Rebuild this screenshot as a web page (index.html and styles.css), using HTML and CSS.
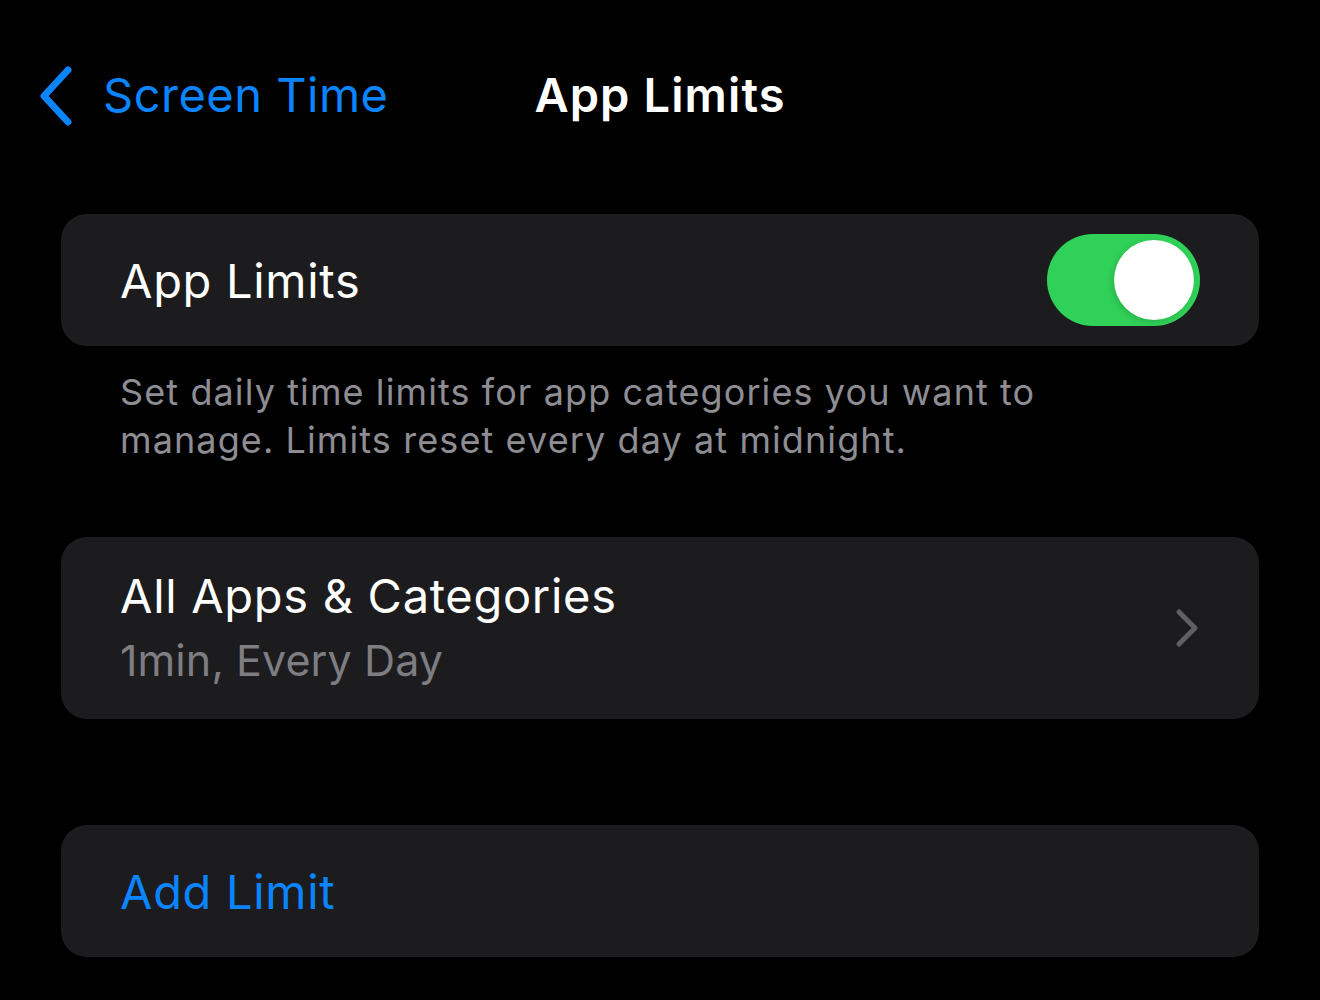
FILE: index.html
```html
<!DOCTYPE html>
<html lang="en">
<head>
<meta charset="utf-8">
<title>App Limits</title>
<link rel="stylesheet" href="styles.css">
</head>
<body>
<header class="nav">
  <a class="back" href="#">
    <svg class="back-icon" width="36" height="60" viewBox="0 0 36 60"><path d="M30 4 L6 30 L30 56" fill="none" stroke="#0a84ff" stroke-width="7" stroke-linecap="round" stroke-linejoin="round"/></svg>
    <span class="back-label">Screen Time</span>
  </a>
  <h1 class="title">App Limits</h1>
  <div class="spacer"></div>
</header>
<main class="content">
  <section class="card row-toggle">
    <span class="row-label">App Limits</span>
    <div class="switch"><div class="knob"></div></div>
  </section>
  <p class="footnote">Set daily time limits for app categories you want to manage. Limits reset every day at midnight.</p>
  <section class="card row-detail">
    <div class="detail-text">
      <span class="row-label">All Apps &amp; Categories</span>
      <span class="row-sub">1min, Every Day</span>
    </div>
    <svg class="chevron" width="24" height="40" viewBox="0 0 24 40"><path d="M4 4 L20 20 L4 36" fill="none" stroke="#5f5f64" stroke-width="5" stroke-linecap="round" stroke-linejoin="round"/></svg>
  </section>
  <section class="card row-action">
    <span class="action-label">Add Limit</span>
  </section>
</main>
</body>
</html>
```
FILE: styles.css
```css
* { box-sizing: border-box; }
html, body {
  margin: 0;
  padding: 0;
  background: #000;
  font-family: Inter, "Noto Sans", "Liberation Sans", sans-serif;
  color: #fff;
}
.nav {
  height: 192px;
  display: grid;
  grid-template-columns: 1fr auto 1fr;
  align-items: center;
}
.back {
  display: flex;
  align-items: center;
  gap: 29px;
  padding-left: 38px;
  text-decoration: none;
  color: #0a84ff;
}
.back-icon { display: block; }
.back-label {
  font-size: 47px;
  letter-spacing: 0.5px;
  transform: translateY(-2px);
}
.title {
  margin: 0;
  font-size: 47px;
  font-weight: 600;
  letter-spacing: 1.1px;
  transform: translateY(-2px);
}
.content {
  padding: 22px 61px 0;
  display: flex;
  flex-direction: column;
}
.card {
  background: #1c1c1e;
  border-radius: 26px;
  display: flex;
  align-items: center;
  padding: 0 59px 0 59px;
}
.row-toggle {
  height: 132px;
  justify-content: space-between;
}
.row-label {
  font-size: 47px;
  letter-spacing: 0.7px;
  color: #fff;
}
.switch {
  width: 153px;
  height: 92px;
  border-radius: 46px;
  background: #30d158;
  display: flex;
  align-items: center;
  justify-content: flex-end;
  padding-right: 6px;
}
.knob {
  width: 80px;
  height: 80px;
  border-radius: 50%;
  background: #fff;
  box-shadow: -2px 2px 6px rgba(0,0,0,0.15);
}
.footnote {
  margin: 22px 0 0;
  padding: 0 150px 0 59px;
  font-size: 36px;
  line-height: 48px;
  color: #8d8d93;
  letter-spacing: 1.1px;
}
.row-detail {
  margin-top: 73px;
  height: 182px;
  justify-content: space-between;
  padding-right: 60px;
}
.detail-text {
  display: flex;
  flex-direction: column;
  gap: 10px;
  margin-top: -4px;
}
.row-sub {
  font-size: 43px;
  color: #7d7d82;
  letter-spacing: 0.1px;
}
.chevron { display: block; }
.row-action {
  margin-top: 106px;
  height: 132px;
}
.action-label {
  font-size: 47px;
  color: #0a84ff;
  letter-spacing: 0.7px;
}
```
